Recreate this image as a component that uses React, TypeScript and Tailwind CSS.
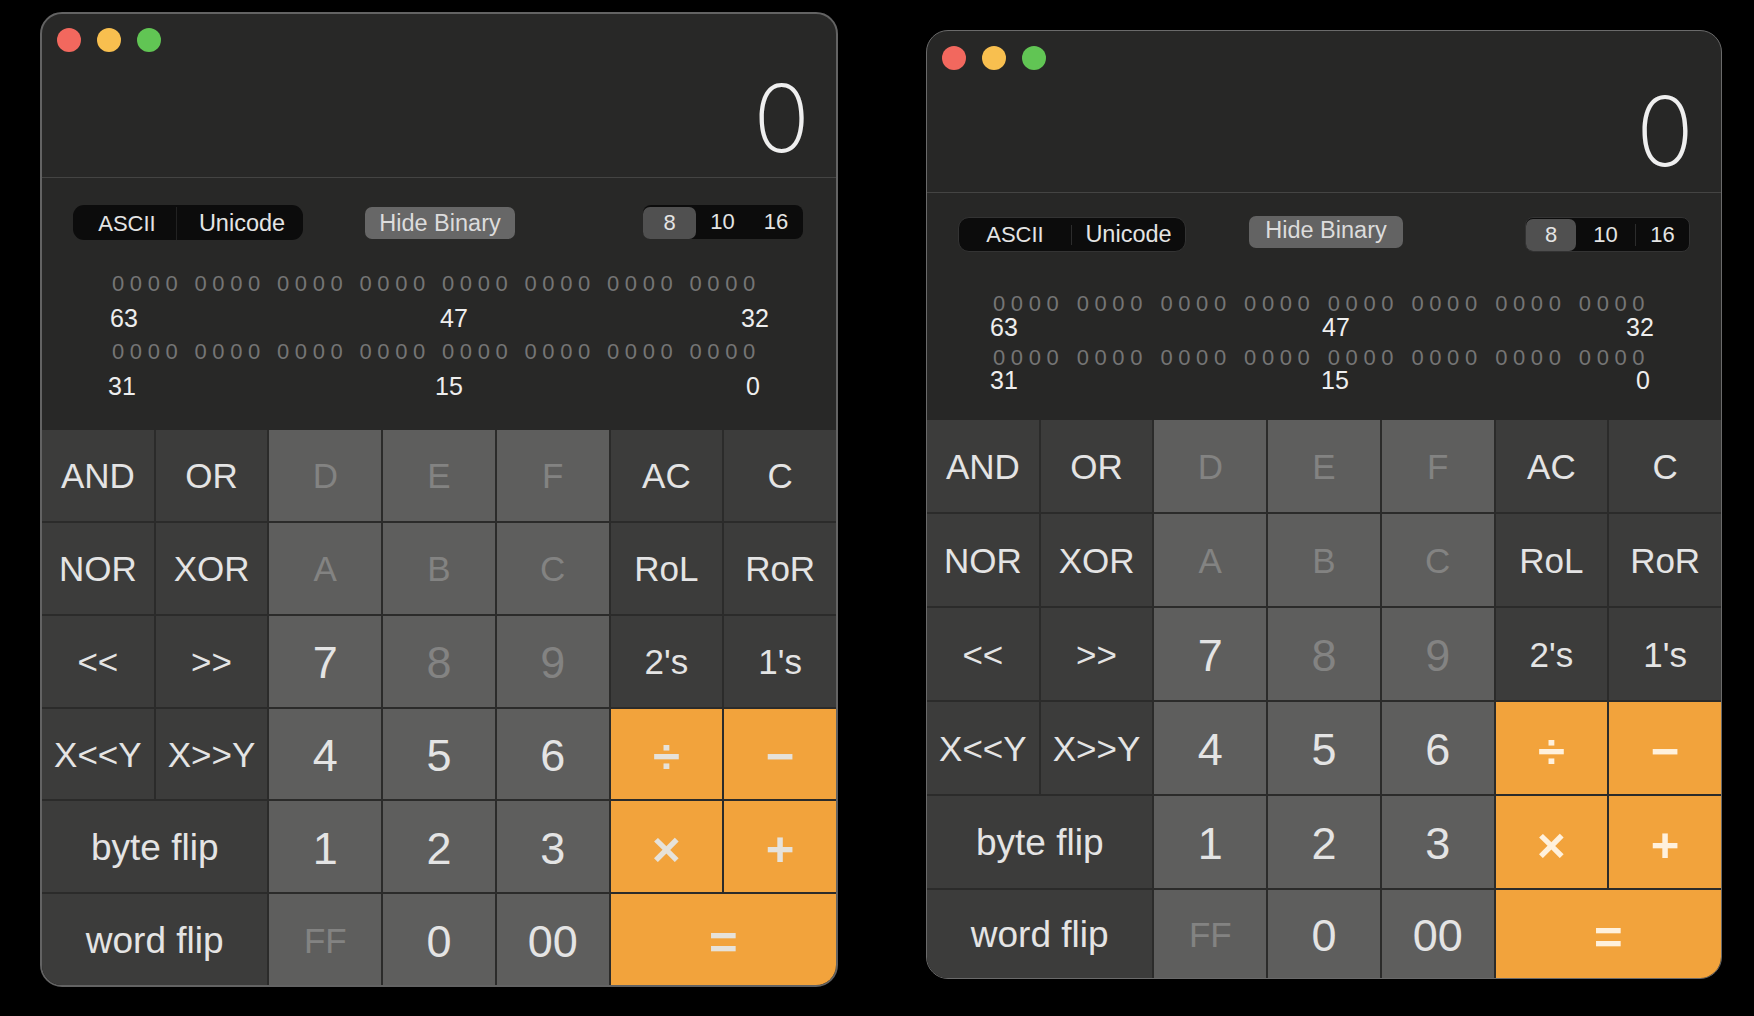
import React from "react";

const sans = "font-['Liberation_Sans',Arial,sans-serif]";

function Lights() {
  return (
    <div className="flex gap-4">
      <span className="h-6 w-6 rounded-full bg-[#f2685e]" />
      <span className="h-6 w-6 rounded-full bg-[#f8bf4f]" />
      <span className="h-6 w-6 rounded-full bg-[#61c554]" />
    </div>
  );
}

function BitRow({ group }: { group: string }) {
  return (
    <div className="flex h-6 items-center text-[22px] leading-6 text-[#757575]">
      {Array.from({ length: 8 }).map((_, i) => (
        <span key={i} className={`${group} whitespace-nowrap tracking-[5.6px]`}>
          0000
        </span>
      ))}
    </div>
  );
}

type KeyKind = "dark" | "mid" | "off" | "op";

function Key({ label, kind, wide, big, opText }: { label: string; kind: KeyKind; wide?: boolean; big?: boolean; opText?: string }) {
  const bg = kind === "dark" ? "bg-[#3c3c3b]" : kind === "op" ? "bg-[#f2a33c]" : "bg-[#5e5e5d]";
  const color = kind === "off" ? "text-[#838382]" : kind === "op" ? opText : "text-[#e4e4e4]";
  const size = kind === "op" ? "pt-[6px] text-[49px] font-bold" : big ? "pt-[3px] text-[45px]" : wide ? "pt-[1px] text-[37px]" : "pt-[1px] text-[35px]";
  return (
    <div className={`flex items-center justify-center ${bg} ${color} ${wide ? "col-span-2" : ""} ${size} leading-none`}>
      {label}
    </div>
  );
}

function Keypad({ opText, rows }: { opText: string; rows: string }) {
  const d = "dark" as KeyKind;
  const m = "mid" as KeyKind;
  const f = "off" as KeyKind;
  const o = "op" as KeyKind;
  return (
    <div className={`grid min-h-0 flex-1 grid-cols-7 ${rows} gap-[2px] bg-[#2b2b2a]`}>
      <Key label="AND" kind={d} />
      <Key label="OR" kind={d} />
      <Key label="D" kind={f} />
      <Key label="E" kind={f} />
      <Key label="F" kind={f} />
      <Key label="AC" kind={d} />
      <Key label="C" kind={d} />
      <Key label="NOR" kind={d} />
      <Key label="XOR" kind={d} />
      <Key label="A" kind={f} />
      <Key label="B" kind={f} />
      <Key label="C" kind={f} />
      <Key label="RoL" kind={d} />
      <Key label="RoR" kind={d} />
      <Key label="<<" kind={d} />
      <Key label=">>" kind={d} />
      <Key label="7" kind={m} big />
      <Key label="8" kind={f} big />
      <Key label="9" kind={f} big />
      <Key label="2's" kind={d} />
      <Key label="1's" kind={d} />
      <Key label="X<<Y" kind={d} />
      <Key label="X>>Y" kind={d} />
      <Key label="4" kind={m} big />
      <Key label="5" kind={m} big />
      <Key label="6" kind={m} big />
      <Key label="÷" kind={o} opText={opText} />
      <Key label="−" kind={o} opText={opText} />
      <Key label="byte flip" kind={d} wide />
      <Key label="1" kind={m} big />
      <Key label="2" kind={m} big />
      <Key label="3" kind={m} big />
      <Key label="×" kind={o} opText={opText} />
      <Key label="+" kind={o} opText={opText} />
      <Key label="word flip" kind={d} wide />
      <Key label="FF" kind={f} />
      <Key label="0" kind={m} big />
      <Key label="00" kind={m} big />
      <Key label="=" kind={o} wide opText={opText} />
    </div>
  );
}

function LeftCalc() {
  return (
    <div className="ml-[40px] mt-[12px] flex h-[975px] w-[798px] flex-col overflow-hidden rounded-[22px] border-2 border-[#636363] bg-[#282827]">
      <div className="h-[416px] shrink-0">
        <div className="h-[164px] border-b border-[#444443] pl-[15px] pt-[14px]">
          <div className="flex items-start justify-between pr-[26px]">
            <Lights />
            <span className="mt-[43px] font-['Inter',sans-serif] text-[94px] font-extralight leading-[94px] text-[#efefef]">0</span>
          </div>
        </div>
        <div className="mt-[27px] flex items-start pl-[31px] text-[22px] leading-none">
          <div className="flex h-[35px] w-[230px] items-center rounded-[11px] bg-[#0c0c0c] pt-[2px] text-[#e4e4e4]">
            <span className="flex h-full w-[104px] items-center justify-center border-r border-[#222] pl-[5px]">ASCII</span>
            <span className="flex-1 pl-[4px] text-center text-[23.5px]">Unicode</span>
          </div>
          <div className="ml-[62px] mt-[2px] flex h-[32px] w-[150px] items-center justify-center rounded-[7px] bg-[#676767] pt-[2px] text-[23.5px] text-[#dcdcdc]">
            Hide Binary
          </div>
          <div className="ml-[128px] flex h-[34px] w-[160px] items-center rounded-[8px] bg-[#0c0c0c] text-[#e4e4e4]">
            <span className="flex h-[32px] w-[53px] items-center justify-center self-end rounded-[7px] bg-[#505050]">8</span>
            <span className="w-[53px] text-center">10</span>
            <span className="w-[54px] text-center">16</span>
          </div>
        </div>
        <div className="mt-[32px] pl-[70px]">
          <BitRow group="w-[82.5px]" />
        </div>
        <div className="mt-[10px] flex pl-[68px] text-[25px] leading-6 text-[#eeeeee]">
          <span className="w-[330px]">63</span>
          <span className="w-[301px]">47</span>
          <span>32</span>
        </div>
        <div className="mt-[10px] pl-[70px]">
          <BitRow group="w-[82.5px]" />
        </div>
        <div className="mt-[10px] flex pl-[66px] text-[25px] leading-6 text-[#eeeeee]">
          <span className="w-[327px]">31</span>
          <span className="w-[311px]">15</span>
          <span>0</span>
        </div>
      </div>
      <Keypad opText="text-[#e6e2da]" rows="grid-rows-6" />
    </div>
  );
}

function RightCalc() {
  return (
    <div className="ml-[88px] mt-[30px] flex h-[949px] w-[796px] flex-col overflow-hidden rounded-[22px] border-[1.5px] border-[#6a6a6a] bg-[#272726]">
      <div className="h-[389px] shrink-0">
        <div className="h-[162px] border-b border-[#444443] pl-[15px] pt-[15px]">
          <div className="flex items-start justify-between pr-[27px]">
            <Lights />
            <span className="mt-[37px] font-['Inter',sans-serif] text-[96px] font-extralight leading-[96px] text-[#efefef]">0</span>
          </div>
        </div>
        <div className="mt-[23px] flex items-start pl-[31px] text-[22px] leading-none">
          <div className="mt-[1px] flex h-[35px] w-[228px] items-center rounded-[11px] border border-[#333] bg-[#0c0c0c] text-[#e4e4e4]">
            <span className="flex h-[20px] w-[113px] items-center justify-center border-r border-[#2c2c2c]">ASCII</span>
            <span className="flex-1 text-center text-[23.5px]">Unicode</span>
          </div>
          <div className="ml-[63px] flex h-[32px] w-[154px] items-center justify-center rounded-[7px] bg-[#636363] pb-[2px] text-[23.5px] text-[#dcdcdc]">
            Hide Binary
          </div>
          <div className="ml-[122px] mt-[1px] flex h-[35px] w-[165px] items-center rounded-[8px] border border-[#333] bg-[#0c0c0c] text-[#e4e4e4]">
            <span className="flex h-[32px] w-[50px] items-center justify-center rounded-[7px] bg-[#505050]">8</span>
            <span className="w-[60px] border-r border-[#2c2c2c] text-center">10</span>
            <span className="flex-1 text-center">16</span>
          </div>
        </div>
        <div className="mt-[40px] pl-[66px]">
          <BitRow group="w-[83.7px]" />
        </div>
        <div className="-mt-[1px] flex pl-[63px] text-[25px] leading-6 text-[#eeeeee]">
          <span className="w-[332px]">63</span>
          <span className="w-[304px]">47</span>
          <span>32</span>
        </div>
        <div className="mt-[7px] pl-[66px]">
          <BitRow group="w-[83.7px]" />
        </div>
        <div className="-mt-[2px] flex pl-[63px] text-[25px] leading-6 text-[#eeeeee]">
          <span className="w-[331px]">31</span>
          <span className="w-[315px]">15</span>
          <span>0</span>
        </div>
      </div>
      <Keypad opText="text-[#fff1dd]" rows="grid-rows-[repeat(5,92px)_1fr]" />
    </div>
  );
}

export default function App() {
  return (
    <div className={`flex h-[1016px] w-[1754px] items-start overflow-hidden bg-black ${sans}`}>
      <LeftCalc />
      <RightCalc />
    </div>
  );
}
